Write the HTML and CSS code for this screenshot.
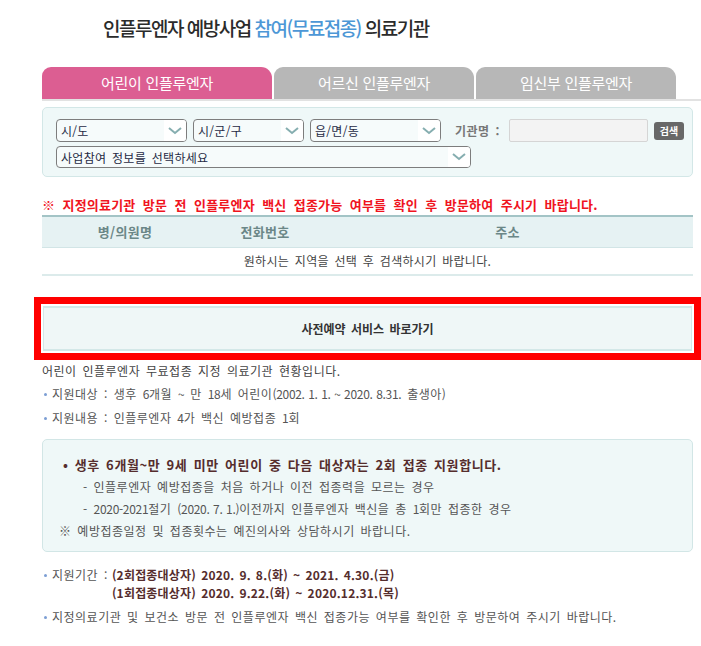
FILE: index.html
```html
<!DOCTYPE html>
<html lang="ko">
<head>
    <meta charset="UTF-8">
    <meta name="viewport" content="width=device-width, initial-scale=1.0">
    <title>인플루엔자 예방사업 참여 의료기관</title>
    <link rel="stylesheet" href="styles.css">
</head>
<body>
    <div class="page">
        <!-- Title -->
        <h1 class="page-title">인플루엔자 예방사업 <span class="accent">참여(무료접종)</span> 의료기관</h1>

        <!-- Tabs -->
        <div class="tabs">
            <div class="tab tab-active">어린이 인플루엔자</div>
            <div class="tab">어르신 인플루엔자</div>
            <div class="tab">임신부 인플루엔자</div>
        </div>

        <!-- Search -->
        <div class="search-box">
            <div class="search-row">
                <div class="select sel-sido"><span>시/도</span><i class="arrow"><svg width="14" height="8" viewBox="0 0 14 8"><path d="M1 1l6 5 6-5" fill="none" stroke="#86aeb0" stroke-width="2"/></svg></i></div>
                <div class="select sel-gugun"><span>시/군/구</span><i class="arrow"><svg width="14" height="8" viewBox="0 0 14 8"><path d="M1 1l6 5 6-5" fill="none" stroke="#86aeb0" stroke-width="2"/></svg></i></div>
                <div class="select sel-dong"><span>읍/면/동</span><i class="arrow"><svg width="14" height="8" viewBox="0 0 14 8"><path d="M1 1l6 5 6-5" fill="none" stroke="#86aeb0" stroke-width="2"/></svg></i></div>
                <label class="name-label">기관명 :</label>
                <div class="name-input"></div>
                <button class="search-btn">검색</button>
            </div>
            <div class="search-row">
                <div class="select sel-type"><span>사업참여 정보를 선택하세요</span><i class="arrow"><svg width="14" height="8" viewBox="0 0 14 8"><path d="M1 1l6 5 6-5" fill="none" stroke="#86aeb0" stroke-width="2"/></svg></i></div>
            </div>
        </div>

        <p class="warning">※ 지정의료기관 방문 전 인플루엔자 백신 접종가능 여부를 확인 후 방문하여 주시기 바랍니다.</p>

        <!-- Result table -->
        <table class="result-table">
            <thead>
                <tr>
                    <th class="col-name">병/의원명</th>
                    <th class="col-tel">전화번호</th>
                    <th>주소</th>
                </tr>
            </thead>
            <tbody>
                <tr>
                    <td colspan="3">원하시는 지역을 선택 후 검색하시기 바랍니다.</td>
                </tr>
            </tbody>
        </table>

        <!-- Reservation link -->
        <div class="highlight">
            <a class="reserve-btn" href="#">사전예약 서비스 바로가기</a>
        </div>

        <p class="intro">어린이 인플루엔자 무료접종 지정 의료기관 현황입니다.</p>
        <ul class="dot-list">
            <li>지원대상 : 생후 <span class="num">6</span>개월 <span class="num">~</span> 만 <span class="num">18</span>세 어린이<span class="num">(2002. 1. 1. ~ 2020. 8.31.</span> 출생아)</li>
            <li>지원내용 : 인플루엔자 <span class="num">4</span>가 백신 예방접종 <span class="num">1</span>회</li>
        </ul>

        <div class="info-box">
            <p class="info-title">• 생후 6개월~만 9세 미만 어린이 중 다음 대상자는 2회 접종 지원합니다.</p>
            <p class="info-sub">- 인플루엔자 예방접종을 처음 하거나 이전 접종력을 모르는 경우</p>
            <p class="info-sub">- <span class="num">2020-2021</span>절기 <span class="num">(2020. 7. 1.)</span>이전까지 인플루엔자 백신을 총 <span class="num">1</span>회만 접종한 경우</p>
            <p class="info-note">※ 예방접종일정 및 접종횟수는 예진의사와 상담하시기 바랍니다.</p>
        </div>

        <ul class="dot-list period-list">
            <li class="period">
                <span class="period-label">지원기간 :</span>
                <span class="period-dates">
                    <b>(2회접종대상자) 2020. 9. 8.(화) ~ 2021. 4.30.(금)</b>
                    <b>(1회접종대상자) 2020. 9.22.(화) ~ 2020.12.31.(목)</b>
                </span>
            </li>
            <li>지정의료기관 및 보건소 방문 전 인플루엔자 백신 접종가능 여부를 확인한 후 방문하여 주시기 바랍니다.</li>
        </ul>
    </div>
</body>
</html>
```

FILE: styles.css
```css
/* Reset */
* {
    margin: 0;
    padding: 0;
    box-sizing: border-box;
    font-family: "Noto Sans CJK KR", "Noto Sans", sans-serif;
}

body {
    background: #ffffff;
    color: #555;
    font-size: 12px;
    letter-spacing: 0.5px;
    word-spacing: 2px;
}

.page {
    width: 701px;
    padding: 0 8px 0 42px;
}

/* digits are narrower than hangul in the original font */
.num {
    letter-spacing: -0.3px;
    word-spacing: 0.5px;
}

/* Title */
.page-title {
    padding: 14px 0 0 61px;
    height: 67px;
    font-size: 19px;
    line-height: 28px;
    font-weight: 500;
    letter-spacing: -1.5px;
    word-spacing: 0;
    color: #2b2b2b;
}

.page-title .accent {
    color: #4d97d6;
}

/* Tabs */
.tabs {
    display: flex;
    gap: 2px;
    margin-right: -8px;
    border-bottom: 2px solid #e2e2e2;
}

.tab {
    width: 200px;
    height: 32px;
    line-height: 32px;
    text-align: center;
    font-size: 15px;
    color: #fff;
    background: #b7b7b7;
    border-radius: 9px 11px 0 0;
    letter-spacing: -0.3px;
    word-spacing: 0;
}

.tab-active {
    width: 230px;
    background: #dc5e92;
}

/* Search box */
.search-box {
    margin-top: 6px;
    height: 70px;
    padding: 11px 13px 0;
    background: #eff8f8;
    border: 1px solid #d3e7e7;
    border-radius: 5px;
    display: flex;
    flex-direction: column;
    gap: 4px;
}

.search-row {
    display: flex;
    align-items: center;
}

.search-row > * {
    flex-shrink: 0;
}

.select {
    display: flex;
    align-items: center;
    height: 23px;
    border: 1px solid #7d7d7d;
    border-radius: 4px;
    background: #f6fbfb;
    color: #1f2a44;
    font-size: 12px;
    letter-spacing: 0.3px;
    margin-right: 6px;
    overflow: hidden;
}

.select span {
    flex: 1;
    padding-left: 4px;
}

.select .arrow {
    width: 22px;
    height: 100%;
    background: #fff;
    display: flex;
    align-items: center;
    justify-content: center;
}

.sel-sido { width: 131px; }
.sel-gugun { width: 111px; }
.sel-dong { width: 131px; }
.sel-type { width: 415px; height: 22px; }

.name-label {
    width: 48px;
    margin-left: 8px;
    margin-right: 6px;
    white-space: nowrap;
    font-size: 12px;
    font-weight: bold;
    color: #777;
    letter-spacing: 0.5px;
    word-spacing: 2px;
}

.name-input {
    width: 139px;
    height: 23px;
    background: #f3f3f3;
    border: 1px solid #d5d5d5;
    border-radius: 2px;
}

.search-btn {
    margin-left: 6px;
    width: 30px;
    height: 18px;
    border: none;
    border-radius: 3px;
    background: #686868;
    color: #fff;
    font-size: 10px;
    font-weight: bold;
    letter-spacing: 0;
}

/* Warning */
.warning {
    margin-top: 18px;
    line-height: 20px;
    font-size: 13px;
    font-weight: bold;
    color: #f0141e;
    word-spacing: 3.5px;
    letter-spacing: 0.2px;
}

/* Table */
.result-table {
    width: 100%;
    border-collapse: collapse;
}

.result-table th {
    height: 31px;
    background: #e6f2f3;
    border-top: 2px solid #a3c4c6;
    border-bottom: 1px solid #d2e5e6;
    font-size: 13px;
    color: #6b8787;
    font-weight: bold;
    letter-spacing: 0.3px;
}

.result-table .col-name { width: 166px; }
.result-table .col-tel { width: 114px; }

.result-table td {
    height: 28px;
    text-align: center;
    font-size: 12px;
    color: #444;
    border-bottom: 2px solid #dcebeb;
    letter-spacing: 0.3px;
}

/* Reservation link */
.highlight {
    margin: 21px -8px 0 -8px;
    border: 7px solid #ff0000;
    padding: 2px;
    background: #fff;
}

.reserve-btn {
    display: block;
    height: 45px;
    line-height: 41px;
    text-align: center;
    background: #eff7f7;
    border: 1px solid #d3e8e8;
    border-width: 2px 1px;
    color: #333;
    font-size: 12px;
    font-weight: bold;
    text-decoration: none;
    letter-spacing: 0;
    word-spacing: 2px;
}

/* Intro + lists */
.intro {
    line-height: 22px;
    color: #444;
}

.dot-list {
    list-style: none;
}

.dot-list li {
    position: relative;
    padding-left: 10px;
    line-height: 24px;
    color: #555;
}

.dot-list li::before {
    content: "";
    position: absolute;
    left: 2px;
    top: 11px;
    width: 3px;
    height: 3px;
    border-radius: 50%;
    background: #7c9ed4;
}

/* Info box */
.info-box {
    margin-top: 9px;
    padding: 14px 16px 9px;
    background: #eff8f8;
    border: 1px solid #d2e6e6;
    border-radius: 5px;
}

.info-box p {
    line-height: 22px;
}

.info-title {
    padding-left: 4px;
    font-weight: bold;
    font-size: 13px;
    color: #552d2d;
    letter-spacing: 0.6px;
    word-spacing: 2px;
}

.info-sub {
    padding-left: 24px;
    color: #555;
}

.info-note {
    color: #555;
}

/* Period */
.period-list {
    margin-top: 14px;
}

.period-list li {
    line-height: 18px;
}

.period-list li + li {
    margin-top: 6px;
}

.period-list li::before {
    top: 8px;
}

.period {
    display: flex;
}

.period-label {
    margin-right: 4px;
}

.period-dates {
    display: flex;
    flex-direction: column;
}

.period-dates b {
    color: #552d2d;
    font-size: 12px;
    letter-spacing: 0.2px;
    word-spacing: 1.5px;
}
```
